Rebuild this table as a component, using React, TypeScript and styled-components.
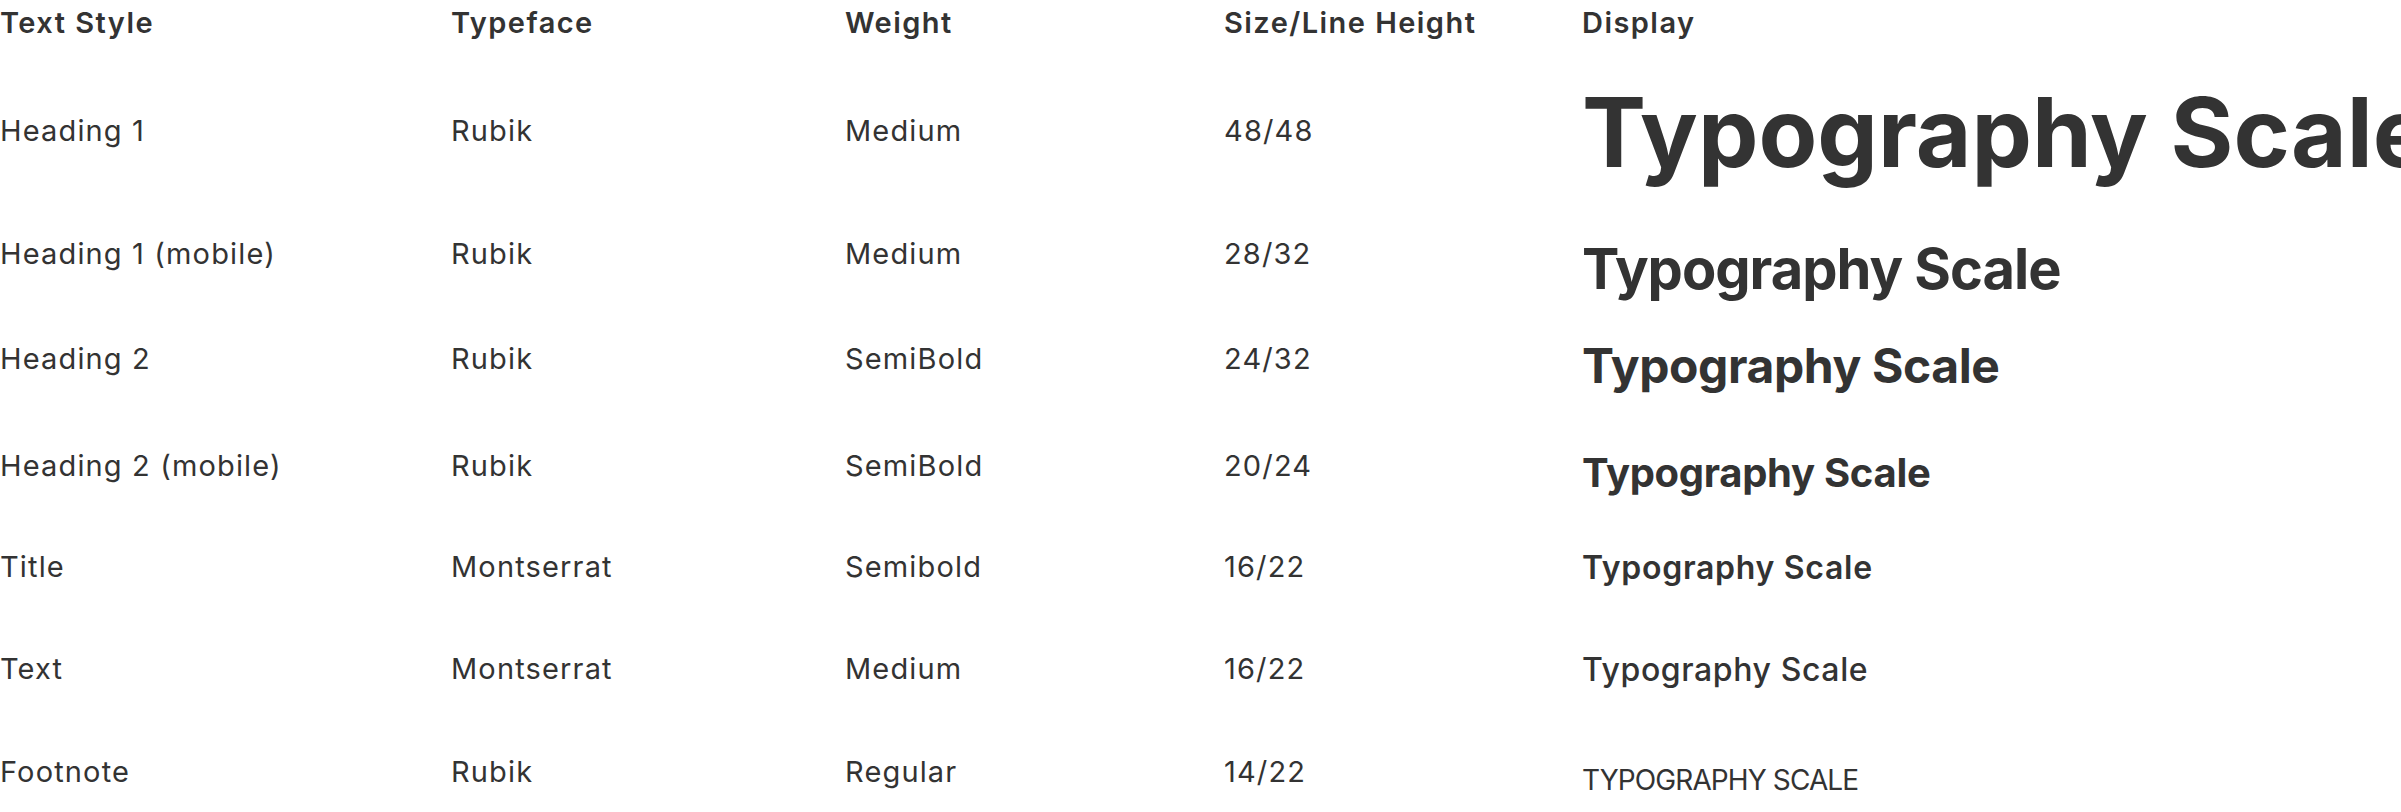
import React from "react";
import styled, { createGlobalStyle } from "styled-components";

const GlobalStyle = createGlobalStyle`
  html, body {
    margin: 0;
    padding: 0;
    background: #ffffff;
    overflow: hidden;
  }
  body {
    font-family: Inter, "Noto Sans", sans-serif;
    color: #333333;
  }
`;

const Table = styled.div`
  display: flex;
  flex-direction: column;
  width: 100%;
  overflow: hidden;
`;

const Row = styled.div<{ $h?: number; $lt: number; $dt: number }>`
  display: grid;
  grid-template-columns: 451px 394px 379px 358px minmax(0, 1fr);
  align-items: start;
  height: ${(p) => (p.$h ? `${p.$h}px` : "auto")};
  --label-top: ${(p) => p.$lt}px;
  --display-top: ${(p) => p.$dt}px;
`;

const Label = styled.div<{ $head?: boolean }>`
  padding-top: var(--label-top);
  font-family: Inter, "Noto Sans", sans-serif;
  font-size: 29px;
  line-height: 40px;
  letter-spacing: ${(p) => (p.$head ? "1.45px" : "1.15px")};
  font-weight: ${(p) => (p.$head ? 600 : 400)};
  color: #333333;
  white-space: nowrap;
`;

const Sample = styled.div<{
  $size: number;
  $weight: number;
  $ls: number;
  $upper?: boolean;
}>`
  padding-top: var(--display-top);
  font-family: Inter, "Noto Sans", sans-serif;
  font-size: ${(p) => p.$size}px;
  line-height: ${(p) => p.$size}px;
  font-weight: ${(p) => p.$weight};
  letter-spacing: ${(p) => p.$ls}px;
  text-transform: ${(p) => (p.$upper ? "uppercase" : "none")};
  color: #333333;
  white-space: nowrap;
`;

type Spec = {
  style: string;
  face: string;
  weight: string;
  size: string;
  h?: number;
  lt: number;
  dt: number;
  fs: number;
  fw: number;
  ls: number;
  upper?: boolean;
};

const specs: Spec[] = [
  { style: "Heading 1", face: "Rubik", weight: "Medium", size: "48/48", h: 150, lt: 27, dt: 0, fs: 96, fw: 700, ls: 0 },
  { style: "Heading 1 (mobile)", face: "Rubik", weight: "Medium", size: "28/32", h: 105, lt: 0, dt: 7, fs: 56, fw: 700, ls: -1.0 },
  { style: "Heading 2", face: "Rubik", weight: "SemiBold", size: "24/32", h: 107, lt: 0, dt: 3, fs: 48, fw: 700, ls: -0.4 },
  { style: "Heading 2 (mobile)", face: "Rubik", weight: "SemiBold", size: "20/24", h: 101, lt: 0, dt: 7, fs: 40, fw: 700, ls: -0.3 },
  { style: "Title", face: "Montserrat", weight: "Semibold", size: "16/22", h: 102, lt: 0, dt: 5, fs: 32, fw: 600, ls: 0.7 },
  { style: "Text", face: "Montserrat", weight: "Medium", size: "16/22", h: 103, lt: 0, dt: 5, fs: 32, fw: 500, ls: 0.6 },
  { style: "Footnote", face: "Rubik", weight: "Regular", size: "14/22", lt: 0, dt: 14, fs: 28, fw: 400, ls: -0.9, upper: true },
];

export default function App() {
  return (
    <>
      <GlobalStyle />
      <Table>
        <Row $h={84} $lt={3} $dt={3}>
          <Label $head>Text Style</Label>
          <Label $head>Typeface</Label>
          <Label $head>Weight</Label>
          <Label $head>Size/Line Height</Label>
          <Label $head>Display</Label>
        </Row>
        {specs.map((s) => (
          <Row key={s.style} $h={s.h} $lt={s.lt} $dt={s.dt}>
            <Label>{s.style}</Label>
            <Label>{s.face}</Label>
            <Label>{s.weight}</Label>
            <Label>{s.size}</Label>
            <Sample $size={s.fs} $weight={s.fw} $ls={s.ls} $upper={s.upper}>
              Typography Scale
            </Sample>
          </Row>
        ))}
      </Table>
    </>
  );
}
